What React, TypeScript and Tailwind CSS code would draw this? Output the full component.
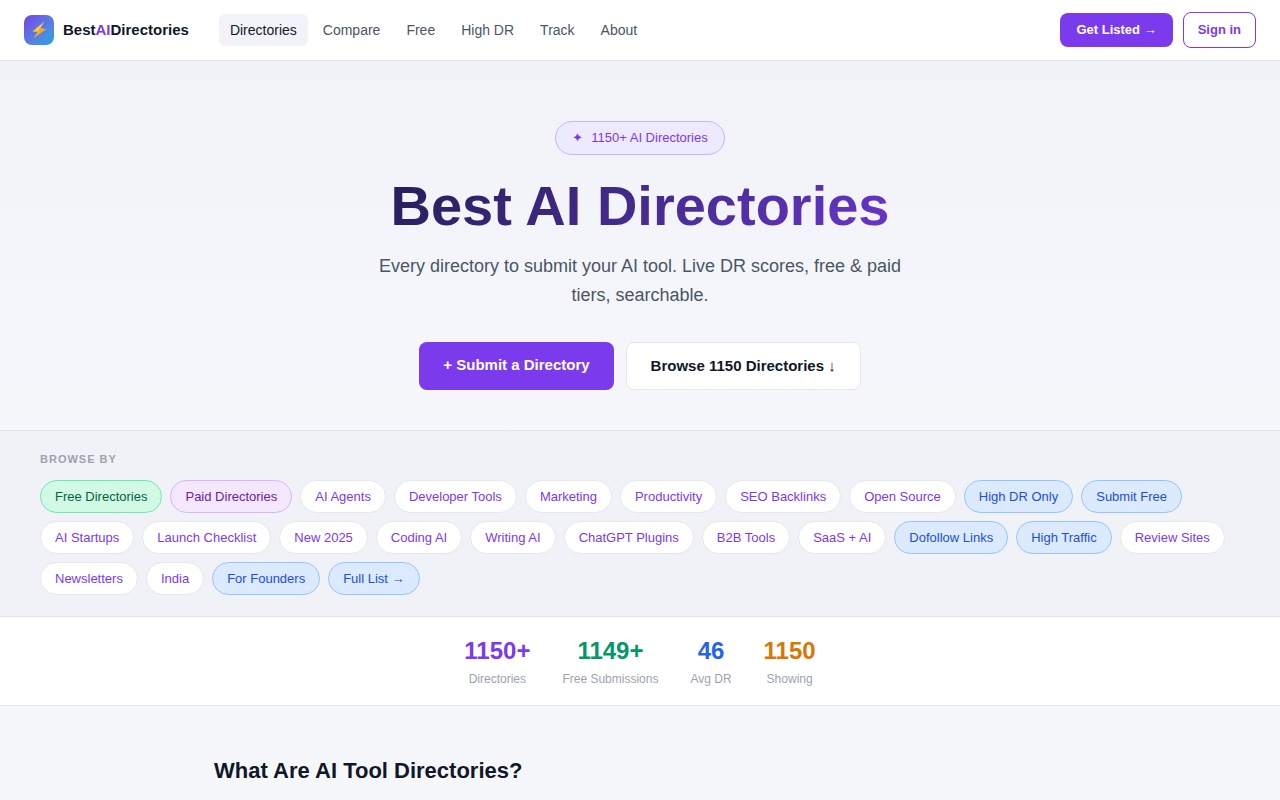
type Chip = { label: string; tone?: 'green' | 'purple' | 'blue' }

const NAV_LINKS = ['Directories', 'Compare', 'Free', 'High DR', 'Track', 'About']

const CHIPS: Chip[] = [
  { label: 'Free Directories', tone: 'green' },
  { label: 'Paid Directories', tone: 'purple' },
  { label: 'AI Agents' },
  { label: 'Developer Tools' },
  { label: 'Marketing' },
  { label: 'Productivity' },
  { label: 'SEO Backlinks' },
  { label: 'Open Source' },
  { label: 'High DR Only', tone: 'blue' },
  { label: 'Submit Free', tone: 'blue' },
  { label: 'AI Startups' },
  { label: 'Launch Checklist' },
  { label: 'New 2025' },
  { label: 'Coding AI' },
  { label: 'Writing AI' },
  { label: 'ChatGPT Plugins' },
  { label: 'B2B Tools' },
  { label: 'SaaS + AI' },
  { label: 'Dofollow Links', tone: 'blue' },
  { label: 'High Traffic', tone: 'blue' },
  { label: 'Review Sites' },
  { label: 'Newsletters' },
  { label: 'India' },
  { label: 'For Founders', tone: 'blue' },
  { label: 'Full List →', tone: 'blue' },
]

const CHIP_TONES = {
  default: 'border-[#e5e7eb] bg-white text-[#7c3aed]',
  green: 'border-[#6ee7b7] bg-[#d1fae5] text-[#065f46]',
  purple: 'border-[#d8b4fe] bg-[#f3e8ff] text-[#6b21a8]',
  blue: 'border-[#93c5fd] bg-[#dbeafe] text-[#1d4ed8]',
}

const STATS = [
  { value: '1150+', label: 'Directories', color: 'text-[#7c3aed]' },
  { value: '1149+', label: 'Free Submissions', color: 'text-[#059669]' },
  { value: '46', label: 'Avg DR', color: 'text-[#2563eb]' },
  { value: '1150', label: 'Showing', color: 'text-[#d97706]' },
]

export default function App() {
  return (
    <div className="min-h-screen bg-[#f5f7fb] font-['Liberation_Sans',Arial,sans-serif] text-[#111827]">
      <Header />
      <main>
        <Hero />
        <BrowseBy />
        <Stats />
        <section id="about" className="mx-auto max-w-[900px] px-6 pt-12">
          <h2 className="text-[22px] leading-[34px] font-bold">What Are AI Tool Directories?</h2>
        </section>
      </main>
    </div>
  )
}

function Header() {
  return (
    <header className="flex items-center border-b border-[#e1e4eb] bg-white px-6 py-3">
      <a href="#" className="mr-[30px] flex items-center gap-[9px]">
        <span className="flex size-[30px] items-center justify-center rounded-lg bg-linear-135 from-[#7040e6] to-[#0aa5e0]">
          <Bolt />
        </span>
        <span className="text-[15px] font-bold">
          Best<span className="text-[#7c3aed]">AI</span>Directories
        </span>
      </a>

      <nav className="flex flex-1 items-center gap-1">
        {NAV_LINKS.map((link, i) => (
          <a
            key={link}
            href="#"
            className={`rounded-md px-[11px] py-1.5 text-sm leading-5 ${
              i === 0 ? 'bg-[#f1f3f8] text-[#111827]' : 'text-[#4b5563]'
            }`}
          >
            {link}
          </a>
        ))}
      </nav>

      <div className="flex items-center gap-2.5">
        <a href="#" className="rounded-lg bg-[#7c3aed] px-4 py-[7px] text-[13px] leading-5 font-bold text-white">
          Get Listed →
        </a>
        <button
          type="button"
          className="rounded-lg border border-[#7c3aed] bg-white px-3.5 py-[7px] text-[13px] leading-5 font-bold text-[#7c3aed]"
        >
          Sign in
        </button>
      </div>
    </header>
  )
}

function Bolt() {
  return (
    <svg viewBox="0 0 16 18" className="h-[18px] w-4" aria-hidden="true">
      <path d="M13 1 1.2 10.4l5.4.7L2.6 17 15 8.2l-5.6-1z" fill="#f9b52b" />
      <path d="M13 1 3.2 9.6l3.6.4z" fill="#fdd055" />
      <path d="M9.4 7.2 15 8.2 2.6 17l6.6-7.2-2.4-.4z" fill="#eda634" />
    </svg>
  )
}

function Hero() {
  return (
    <section className="border-b border-[#e1e4eb] bg-linear-to-b from-[#f0f2f7] via-[#f4f5fb] to-[#f5f7fb] px-6 pt-15 pb-10 text-center">
      <p className="mb-5 inline-flex items-center gap-2 rounded-full border border-[#c4b5fd] bg-[#ede9fe] px-4 py-1.5 text-[13px] leading-5 text-[#7c3aed]">
        <span>✦</span>
        <span>1150+ AI Directories</span>
      </p>
      <h1 className="mx-auto mb-[15px] max-w-[800px] bg-linear-135 from-[#1e1b4b] from-10% to-[#7c3aed] bg-clip-text text-[56px] leading-[62px] font-bold text-transparent">
        Best AI Directories
      </h1>
      <p className="mx-auto mb-8 max-w-[560px] text-lg leading-[29px] text-[#4b5563]">
        Every directory to submit your AI tool. Live DR scores, free & paid tiers, searchable.
      </p>
      <div className="flex flex-wrap justify-center gap-3">
        <a href="#" className="rounded-lg bg-[#7c3aed] px-6 py-[11px] text-[15px] leading-6 font-bold text-white">
          + Submit a Directory
        </a>
        <a
          href="#browse"
          className="rounded-lg border border-[#e5e7eb] bg-white px-6 py-[11px] text-[15px] leading-6 font-bold text-[#111827]"
        >
          Browse 1150 Directories ↓
        </a>
      </div>
    </section>
  )
}

function BrowseBy() {
  return (
    <section id="browse" className="border-b border-[#e1e4eb] bg-[#f0f2f7] px-10 pt-5 pb-[21px]">
      <h2 className="mb-3 text-[11px] leading-[17px] font-bold tracking-[1px] text-[#9ca3af] uppercase">Browse by</h2>
      <div className="flex flex-wrap gap-2">
        {CHIPS.map(chip => (
          <a
            key={chip.label}
            href="#"
            className={`rounded-full border px-3.5 py-1.5 text-[13px] leading-[19px] ${CHIP_TONES[chip.tone ?? 'default']}`}
          >
            {chip.label}
          </a>
        ))}
      </div>
    </section>
  )
}

function Stats() {
  return (
    <section className="flex flex-wrap justify-center gap-8 border-b border-[#e1e4eb] bg-white px-6 py-4">
      {STATS.map(stat => (
        <div key={stat.label} className="text-center">
          <div className={`text-2xl leading-9 font-bold ${stat.color}`}>{stat.value}</div>
          <div className="text-xs leading-5 text-[#9ca3af]">{stat.label}</div>
        </div>
      ))}
    </section>
  )
}
